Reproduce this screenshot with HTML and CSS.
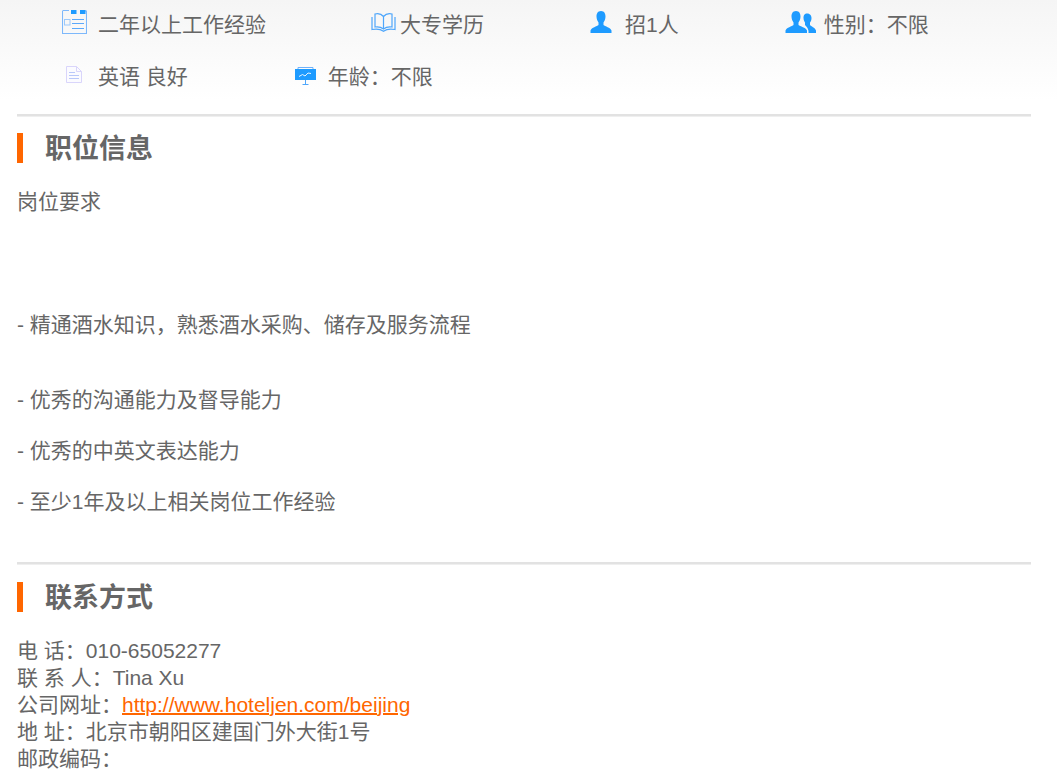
FILE: index.html
```html
<!DOCTYPE html>
<html lang="zh-CN">
<head>
<meta charset="utf-8">
<title>职位信息</title>
<link rel="stylesheet" href="styles.css">
</head>
<body>
<main class="page">
  <section class="summary">
    <ul class="facts">
      <li class="fact">
        <svg class="icon icon-cal" viewBox="0 0 25 24"><path d="M.5 1V23.500H24.500V1H23M7 .5H.5" fill="none" stroke="#7db8fb" stroke-width="1.100"/><rect x="9" y="0" width="5.500" height="4" fill="#1e9bff"/><rect x="18" y="0" width="5.500" height="4" fill="#1e9bff"/><rect x="2.500" y="9.500" width="5.500" height="5.500" fill="none" stroke="#9cc9fb"/><path d="M10 9.500H22M10 13.500H22M10 18.500H22" stroke="#5aa8fb" fill="none"/></svg>
        <span>二年以上工作经验</span>
      </li>
      <li class="fact">
        <svg class="icon icon-book" viewBox="0 0 25 19"><path d="M12.500 3.500C10 .5 6 .5 4 1V14C7 13.500 10 14 12.500 16C15 14 18 13.500 21 14V1C19 .5 15 .5 12.500 3.500ZM12.500 3.500V15.500" fill="none" stroke="#4ea6fb" stroke-width="1.200"/><path d="M1 4V16.500C6 15.500 9.500 16 12.500 18.300C15.500 16 19 15.500 24 16.500V4" fill="none" stroke="#4ea6fb" stroke-width="1.200"/></svg>
        <span>大专学历</span>
      </li>
      <li class="fact">
        <svg class="icon icon-user" viewBox="0 0 22 22"><path d="M11 0C7.500 0 6.500 3 6.500 5.500C6.500 8 7.500 10 8.500 11.500V14C7 15.500 1.500 16.500 0.500 19.500V22H21.500V19.500C20.500 16.500 15 15.500 13.500 14V11.500C14.500 10 15.500 8 15.500 5.500C15.500 3 14.500 0 11 0Z" fill="#1e9bff"/></svg>
        <span>招1人</span>
      </li>
      <li class="fact">
        <svg class="icon icon-users" viewBox="0 0 31 22"><path d="M22 2.500C19 2.500 18.500 5 18.500 7C18.500 9 19.500 10.500 20 11.500V14C21.500 15.500 23 17 23.500 20V22H31V19.500C30 16.500 26 15.500 25 14V11.500C25.800 10.500 26.500 9 26.500 7C26.500 5 25.500 2.500 22 2.500Z" fill="#1e9bff"/><path d="M11 0C7.500 0 6.500 3 6.500 5.500C6.500 8 7.500 10 8.500 11.500V14C7 15.500 1.500 16.500 0.500 19.500V22H22V19.500C21 16.500 15 15.500 13.500 14V11.500C14.500 10 15.500 8 15.500 5.500C15.500 3 14.500 0 11 0Z" fill="#1e9bff"/></svg>
        <span>性别：不限</span>
      </li>
    </ul>
    <ul class="facts">
      <li class="fact">
        <svg class="icon icon-doc" viewBox="0 0 16 17"><path d="M.5.500H10.500L15.500 5.500V16.500H.5Z" fill="#fbfbff" stroke="#d9d5fb"/><path d="M10.500.500V5.500H15.500" fill="none" stroke="#d9d5fb"/><path d="M3 6.500H9M3 9.500H13M3 12.500H13" stroke="#b9c8fa" fill="none"/></svg>
        <span>英语 良好</span>
      </li>
      <li class="fact">
        <svg class="icon icon-board" viewBox="0 0 21 18"><rect x="0" y="2" width="21" height="11" fill="#1e9bff"/><path d="M3 2V.5H18V2" fill="none" stroke="#6fb2fb"/><path d="M4 9.500L7.500 7.500L10 9L13 6L16 6.500" fill="none" stroke="#e6f4ff"/><path d="M10.500 13V17M7.500 17.500H13.500" stroke="#4ea6fb" fill="none"/></svg>
        <span>年龄：不限</span>
      </li>
    </ul>
  </section>

  <section class="block block-job">
    <h2 class="block-title">职位信息</h2>
    <div class="description">
      <p class="gap-lg">岗位要求</p>
      <p class="gap-md">- 精通酒水知识，熟悉酒水采购、储存及服务流程</p>
      <p>- 优秀的沟通能力及督导能力</p>
      <p>- 优秀的中英文表达能力</p>
      <p>- 至少1年及以上相关岗位工作经验</p>
    </div>
  </section>

  <section class="block block-contact">
    <h2 class="block-title">联系方式</h2>
    <ul class="contact">
      <li>电 话：010-65052277</li>
      <li>联 系 人：Tina Xu</li>
      <li>公司网址：<a href="#">http://www.hoteljen.com/beijing</a></li>
      <li>地 址：北京市朝阳区建国门外大街1号</li>
      <li>邮政编码：</li>
    </ul>
  </section>
</main>
</body>
</html>
```

FILE: styles.css
```css
* { box-sizing: border-box; }

html, body {
  margin: 0;
  padding: 0;
  background: #fff;
}

body {
  height: 778px;
  overflow: hidden;
  font-family: "Liberation Sans", "Noto Sans CJK SC", sans-serif;
  font-size: 21px;
  line-height: 27px;
  color: #666;
}

.page {
  padding: 0 26px 0 17px;
  background: linear-gradient(#f5f5f5 0, #fff 100px) no-repeat;
}

ul {
  list-style: none;
  margin: 0;
  padding: 0;
}

.summary {
  padding: 0 0 10px 45px;
}

.facts {
  display: flex;
  height: 52px;
  padding-bottom: 4px;
  gap: 105px;
}

.facts + .facts {
  gap: 107px;
}

.fact {
  display: flex;
  align-items: center;
}

.icon { display: block; flex: none; }

.icon-cal { width: 25px; height: 24px; margin: -5px 11px 0 0; }
.icon-book { width: 25px; height: 19px; margin: -3px 4px 0 0; }
.icon-user { width: 22px; height: 22px; margin: -4px 13px 0 1px; }
.icon-users { width: 31px; height: 22px; margin: -4px 8px 0 1px; }
.icon-doc { width: 16px; height: 17px; margin: -4px 16px 0 4px; }
.icon-board { width: 21px; height: 18px; margin: -1px 12px 0 0; }

.block {
  border-top: 2px solid #e2e2e2;
  box-shadow: inset 0 1px #efefef;
}

.block-job { padding: 17px 0 23px; }
.block-contact { padding: 18px 0 0; }

.block-title {
  margin: 0;
  height: 30px;
  padding-left: 22px;
  border-left: 6px solid #f60;
  font-size: 27px;
  line-height: 32px;
  font-weight: 700;
}

.description { padding-top: 25px; }

.description p {
  margin: 0 0 24px;
}

.description .gap-lg { margin-bottom: 96px; }
.description .gap-md { margin-bottom: 48px; }

.contact { padding-top: 25px; }

.contact a {
  color: #f60;
  text-decoration: underline;
  text-decoration-thickness: 2px;
}
```
